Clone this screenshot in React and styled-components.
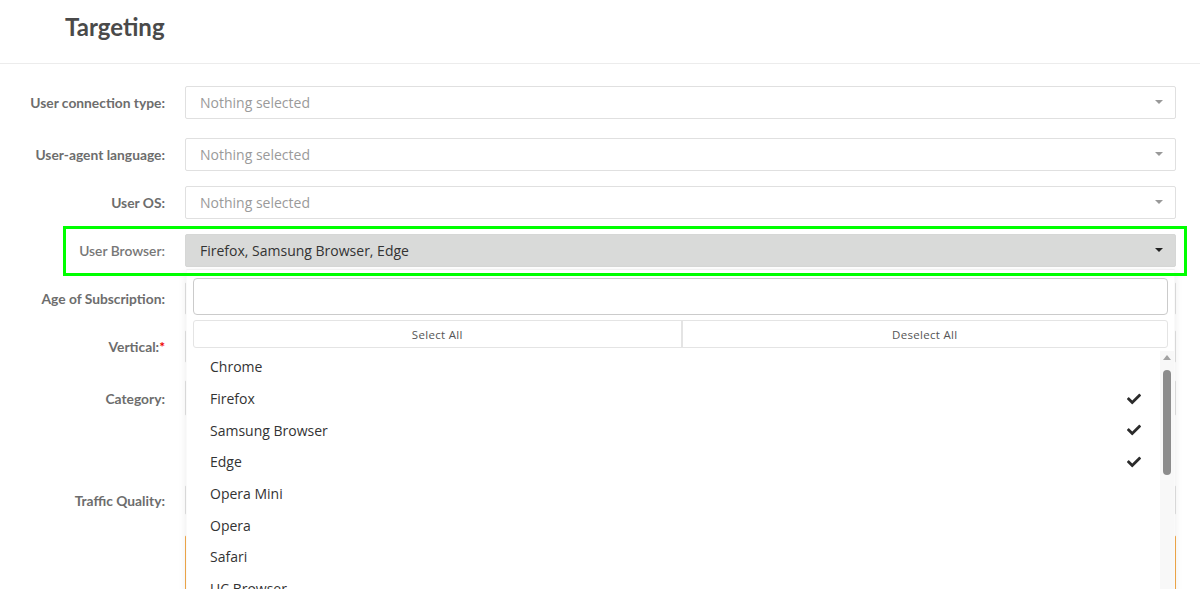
import React from "react"
import styled, { createGlobalStyle } from "styled-components"
import { FaCheck } from "react-icons/fa"

const GlobalStyle = createGlobalStyle`
  html, body {
    margin: 0;
    padding: 0;
    overflow: hidden;
    background: #fff;
  }
  * {
    box-sizing: border-box;
  }
`

const browsers = [
  { name: "Chrome", checked: false },
  { name: "Firefox", checked: true },
  { name: "Samsung Browser", checked: true },
  { name: "Edge", checked: true },
  { name: "Opera Mini", checked: false },
  { name: "Opera", checked: false },
  { name: "Safari", checked: false },
  { name: "UC Browser", checked: false },
  { name: "Yandex", checked: false },
]

export default function App() {
  return (
    <Page>
      <GlobalStyle />
      <Header>
        <Title>Targeting</Title>
      </Header>
      <Form>
        <Row $gap={22}>
          <Label>User connection type:</Label>
          <Select>
            <Placeholder>Nothing selected</Placeholder>
            <Caret />
          </Select>
        </Row>
        <Row $gap={19}>
          <Label>User-agent language:</Label>
          <Select>
            <Placeholder>Nothing selected</Placeholder>
            <Caret />
          </Select>
        </Row>
        <Row $gap={15}>
          <Label>User OS:</Label>
          <Select>
            <Placeholder>Nothing selected</Placeholder>
            <Caret />
          </Select>
        </Row>
        <Row $gap={15} $focus>
          <Label $light>User Browser:</Label>
          <SelectWrap>
            <Select $active>
              <Value>Firefox, Samsung Browser, Edge</Value>
              <Caret $dark />
            </Select>
            <Menu>
              <MenuTop>
                <SearchBox />
                <Actions>
                  <ActionButton>Select All</ActionButton>
                  <ActionButton $divider>Deselect All</ActionButton>
                </Actions>
              </MenuTop>
              <ListArea>
                <Items>
                  {browsers.map((b) => (
                    <Item key={b.name}>
                      <span>{b.name}</span>
                      {b.checked && <FaCheck size={14} color="#2b2b2b" />}
                    </Item>
                  ))}
                </Items>
                <ScrollTrack>
                  <ScrollArrow />
                  <ScrollThumb />
                </ScrollTrack>
              </ListArea>
            </Menu>
          </SelectWrap>
          <Highlight />
        </Row>
        <Row $gap={15}>
          <Label>Age of Subscription:</Label>
          <Select />
        </Row>
        <Row $gap={15}>
          <Label>
            Vertical:<Required>*</Required>
          </Label>
          <Select />
        </Row>
        <Row $gap={17} $height={36}>
          <Label>Category:</Label>
          <Select />
        </Row>
        <Row $gap={69} $height={30}>
          <Label>Traffic Quality:</Label>
          <Select />
        </Row>
        <Row $gap={20} $height={120}>
          <span />
          <Select $warn />
        </Row>
      </Form>
    </Page>
  )
}

const Page = styled.div`
  width: 1200px;
  height: 589px;
  overflow: hidden;
  font-family: "Open Sans", "Noto Sans", sans-serif;
`

const Header = styled.div`
  height: 64px;
  border-bottom: 1px solid #ececec;
  padding: 12px 0 0 65px;
`

const Title = styled.h2`
  margin: 0;
  font-family: Lato, "Open Sans", sans-serif;
  font-size: 24px;
  font-weight: 700;
  color: #4a4a4a;
  line-height: 30px;
`

const Form = styled.div`
  display: flex;
  flex-direction: column;
`

const Row = styled.div`
  position: relative;
  display: grid;
  grid-template-columns: 165px 1fr;
  column-gap: 20px;
  align-items: center;
  padding-right: 24px;
  margin-top: ${(p) => p.$gap}px;
  height: ${(p) => p.$height || 33}px;
  z-index: ${(p) => (p.$focus ? 5 : 1)};
`

const Label = styled.label`
  text-align: right;
  font-family: Lato, "Open Sans", sans-serif;
  font-size: 13.8px;
  font-weight: ${(p) => (p.$light ? 600 : 700)};
  color: ${(p) => (p.$light ? "#777" : "#6d6d6d")};
`

const Required = styled.span`
  color: #e00;
`

const SelectWrap = styled.div`
  position: relative;
  height: 100%;
`

const Select = styled.div`
  display: flex;
  align-items: center;
  justify-content: space-between;
  height: 100%;
  padding: 0 12px 1px 14px;
  border: 1px solid ${(p) => (p.$active ? "#d6d7d6" : p.$warn ? "#f3a94a" : "#e0e0e0")};
  border-radius: 2px;
  background: ${(p) => (p.$active ? "#d9dad9" : "#fff")};
  font-size: 14px;
`

const Placeholder = styled.span`
  color: #9a9a9a;
`

const Value = styled.span`
  color: #333;
`

const Caret = styled.span`
  width: 0;
  height: 0;
  border-left: 4px solid transparent;
  border-right: 4px solid transparent;
  border-top: 4px solid ${(p) => (p.$dark ? "#222" : "#999")};
`

const Highlight = styled.div`
  position: absolute;
  top: -8px;
  bottom: -9px;
  left: 63px;
  right: 13px;
  border: 3px solid #00ff00;
  pointer-events: none;
  z-index: 20;
`

const Menu = styled.div`
  position: absolute;
  top: calc(100% + 2px);
  left: 1px;
  right: 1px;
  height: 340px;
  background: #fff;
  border: 1px solid rgba(0, 0, 0, 0.05);
  border-left-color: rgba(0, 0, 0, 0.02);
  border-right-color: rgba(0, 0, 0, 0.02);
  box-shadow: 0 3px 8px rgba(0, 0, 0, 0.08);
  z-index: 10;
`

const MenuTop = styled.div`
  padding: 8px 6px 0 6px;
`

const SearchBox = styled.div`
  height: 37px;
  border: 1px solid #cbcbcb;
  border-radius: 4px;
`

const Actions = styled.div`
  display: grid;
  grid-template-columns: 1fr 1fr;
  height: 28px;
  margin-top: 5px;
  border: 1px solid #e4e4e4;
  border-radius: 3px;
`

const ActionButton = styled.div`
  display: flex;
  align-items: center;
  justify-content: center;
  font-size: 11.5px;
  letter-spacing: 0.3px;
  color: #555;
  border-left: ${(p) => (p.$divider ? "2px solid #e4e4e4" : "none")};
`

const ListArea = styled.div`
  display: flex;
  margin-top: 3px;
`

const Items = styled.div`
  flex: 1;
`

const Item = styled.div`
  display: flex;
  align-items: center;
  justify-content: space-between;
  height: 31.7px;
  padding: 0 19px 0 23px;
  font-size: 14px;
  color: #333;
`

const ScrollTrack = styled.div`
  width: 14px;
  background: #f8f8f8;
  display: flex;
  flex-direction: column;
  align-items: center;
  padding-top: 4px;
`

const ScrollArrow = styled.span`
  width: 0;
  height: 0;
  border-left: 4px solid transparent;
  border-right: 4px solid transparent;
  border-bottom: 5px solid #a3a3a3;
`

const ScrollThumb = styled.div`
  width: 8px;
  height: 105px;
  margin-top: 10px;
  border-radius: 4px;
  background: #8c8c8c;
`
